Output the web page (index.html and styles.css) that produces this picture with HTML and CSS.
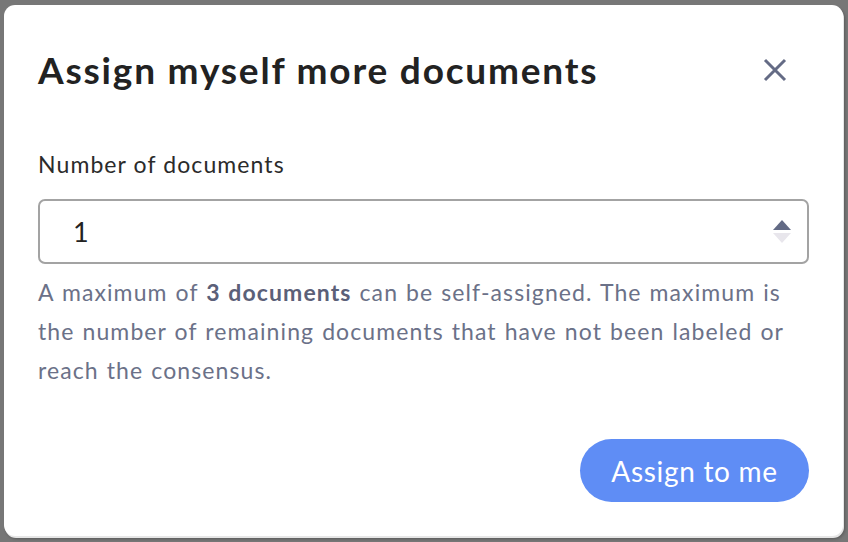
FILE: index.html
```
<!DOCTYPE html>
<html>
<head>
<meta charset="utf-8">
<link rel="stylesheet" href="styles.css">
</head>
<body>
<div class="modal">
  <div class="header">
    <h1 class="title">Assign myself more documents</h1>
    <button class="close" aria-label="Close">
      <svg width="24" height="24" viewBox="0 0 24 24"><path d="M2 2 L22 22 M22 2 L2 22" stroke="#646b85" stroke-width="3" fill="none" stroke-linecap="butt"/></svg>
    </button>
  </div>
  <div class="body">
    <label class="label">Number of documents</label>
    <div class="input">
      <span class="value">1</span>
      <span class="spin">
        <span class="up"></span>
        <span class="down"></span>
      </span>
    </div>
    <p class="help">A maximum of <b>3 documents</b> can be self-assigned. The maximum is the number of remaining documents that have not been labeled or reach the consensus.</p>
  </div>
  <div class="footer">
    <button class="primary">Assign to me</button>
  </div>
</div>
</body>
</html>
```
FILE: styles.css
```
html, body { margin: 0; height: 100%; }
body {
  background: #777777;
  padding: 5px 5px 6px 4px;
  box-sizing: border-box;
  font-family: "Lato", "Open Sans", sans-serif;
}
.modal {
  background: #fff;
  border-radius: 11px;
  height: 531px;
  box-sizing: border-box;
  padding: 0 34px 0 34px;
  box-shadow: 1px 2px 0 #e6e6e6, 2px 3px 3px rgba(0,0,0,0.25);
  display: flex;
  flex-direction: column;
}
.header {
  display: flex;
  align-items: center;
  justify-content: space-between;
  height: 129px;
}
.title {
  margin: 0;
  font-size: 37px;
  line-height: 44px;
  font-weight: 700;
  color: #222;
  letter-spacing: 1.8px;
}
.close {
  border: 0;
  background: none;
  padding: 0;
  margin-right: 22px;
  width: 24px;
  height: 24px;
  display: flex;
}
.body { display: flex; flex-direction: column; }
.label {
  font-size: 23px;
  line-height: 28px;
  color: #2b2b2b;
  letter-spacing: 1.1px;
  margin-top: 16px;
}
.input {
  margin-top: 21px;
  height: 65px;
  border: 2px solid #a3a3a3;
  border-radius: 7px;
  box-sizing: border-box;
  display: flex;
  align-items: center;
  justify-content: space-between;
  padding: 0 16px 0 33px;
}
.value { font-size: 27px; color: #222; }
.spin { display: flex; flex-direction: column; gap: 3px; }
.up, .down { width: 0; height: 0; border-left: 9px solid transparent; border-right: 9px solid transparent; }
.up { border-bottom: 10px solid #626a85; }
.down { border-top: 10px solid #e8e6ec; }
.help {
  margin: 9px 0 0;
  font-size: 23px;
  line-height: 39px;
  color: #6b7188;
  letter-spacing: 1.1px;
  word-spacing: 1px;
}
.help b { color: #5b6078; }
.footer {
  display: flex;
  justify-content: flex-end;
  margin-top: auto;
  padding-bottom: 34px;
}
.primary {
  background: #5f8df5;
  color: #fff;
  border: 0;
  border-radius: 32px;
  height: 63px;
  width: 229px;
  font-family: inherit;
  font-size: 28px;
  letter-spacing: 0.7px;
}
```
